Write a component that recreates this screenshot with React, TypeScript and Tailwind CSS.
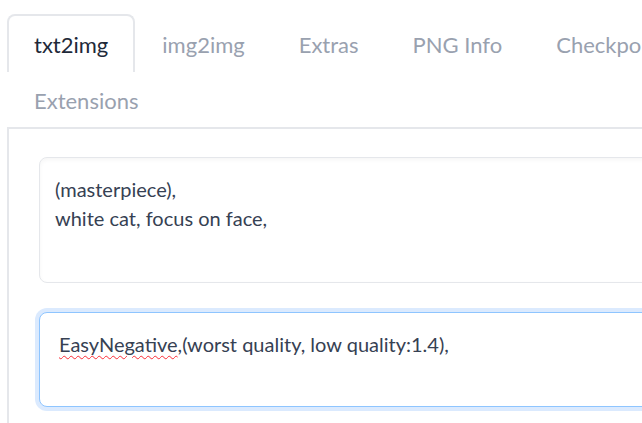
const tabs = ["txt2img", "img2img", "Extras", "PNG Info", "Checkpoint Merger", "Train", "Settings"];

function Tab({ label, active }: { label: string; active?: boolean }) {
  return (
    <div
      className={
        active
          ? "flex shrink-0 items-center rounded-t-lg border-2 border-b-0 border-gray-200 bg-white px-[25px] text-gray-800"
          : "flex shrink-0 items-center border-2 border-b-0 border-transparent px-[25px] text-gray-400"
      }
    >
      {label}
    </div>
  );
}

export default function App() {
  return (
    <div className="h-screen w-full overflow-hidden bg-white font-['Lato',sans-serif]">
      <div className="w-[1000px] pl-[7px] pt-[14px]">
        {/* tab rows */}
        <div className="flex h-[58px] text-[22px]">
          {tabs.map((t, i) => (
            <Tab key={t} label={t} active={i === 0} />
          ))}
        </div>
        <div className="flex h-[55px] text-[22px]">
          <Tab label="Extensions" />
        </div>

        {/* panel */}
        <div className="h-[400px] border-l-2 border-t-2 border-gray-200 pl-[30px] pt-[28px]">
          <div className="h-[126px] rounded-lg border border-gray-200 bg-white px-[15px] pt-[17px] text-[20px] leading-[29px] text-gray-700 shadow-[inset_0_2px_4px_rgba(0,0,0,0.04)]">
            <div>(masterpiece),</div>
            <div>white cat, focus on face,</div>
          </div>
          <div className="mt-[29px] h-[95px] rounded-lg border border-blue-300 bg-white px-[19px] pt-[17px] text-[20px] leading-[29px] text-gray-700 ring-4 ring-blue-100">
            <span className="underline decoration-red-500 decoration-wavy decoration-1 underline-offset-[3px]">
              EasyNegative
            </span>
            ,(worst quality, low quality:1.4),
          </div>
        </div>
      </div>
    </div>
  );
}
